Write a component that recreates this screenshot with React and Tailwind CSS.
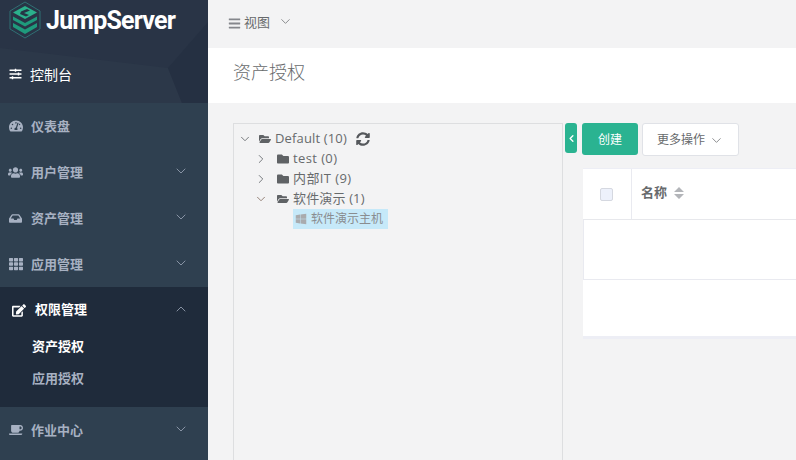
import React from "react";
import { FaTachometerAlt, FaUsers, FaInbox, FaTh, FaEdit, FaCoffee, FaWindows, FaFolder, FaFolderOpen, FaSyncAlt, FaBars, FaSlidersH } from "react-icons/fa";
import { LuChevronDown, LuChevronUp, LuChevronRight, LuChevronLeft } from "react-icons/lu";

const cjk = '"Open Sans","Noto Sans CJK SC",sans-serif';

function Item({ icon, label, arrow = true }) {
  return (
    <div className="flex h-[46px] items-center pl-[8px] pr-[19px] text-[13px] font-bold text-[#a7b1c2]">
      <span className="flex w-[15px] justify-center">{icon}</span>
      <span className="ml-[8px] flex-1 pt-[1px]">{label}</span>
      {arrow && <LuChevronDown className="mb-[3px] h-[16px] w-[16px] text-[#97a1b3]" strokeWidth={1.3} />}
    </div>
  );
}

function Logo() {
  return (
    <svg width="32" height="38" viewBox="0 0 32 38" className="shrink-0">
      <path d="M16 1 L31 10 V28 L16 37 L1 28 V10 Z" fill="none" stroke="#2f6f73" strokeWidth="1" />
      <path d="M16 5 L28 11.5 L16 18 L4 11.5 Z" fill="#2bb08c" />
      <path d="M4 15.5 L16 22 L28 15.5 V19 L16 25.5 L4 19 Z" fill="#1f9a7c" />
      <path d="M4 22 L16 28.5 L28 22 V26 L16 33 L4 26 Z" fill="#1f9a7c" />
      <path d="M12 10.5 L18 8 L21 9.5 L15 12 L20 14 L17 15.5 L11 13 Z" fill="#263445" />
    </svg>
  );
}

function TreeRow({ arrow, folder, label, sub, extra, wide }) {
  return (
    <div className={`flex h-[20px] items-center text-[13px] text-[#676a6c] ${sub ? "pl-[16px]" : ""} ${wide ? "tracking-[0.4px]" : "tracking-[0.15px]"}`}>
      <span className="flex w-[14px] justify-center text-[#6f7276]">{arrow}</span>
      <span className={`flex w-[14px] justify-center text-[12px] text-[#5f6265] ${sub ? "ml-[8px]" : "ml-[6px]"}`}>{folder}</span>
      <span className="ml-[3px] whitespace-nowrap">{label}</span>
      {extra}
    </div>
  );
}

export default function App() {
  const down = <LuChevronDown className="h-[14px] w-[14px]" strokeWidth={1.6} />;
  const right = <LuChevronRight className="h-[14px] w-[14px]" strokeWidth={1.6} />;
  return (
    <div className="flex h-[460px] w-[796px] overflow-hidden bg-[#f3f3f4]" style={{ fontFamily: cjk }}>
      <aside className="flex w-[208px] shrink-0 flex-col bg-[#2f4050]">
        <div className="relative h-[103px] overflow-hidden bg-[#293446]">
          <svg className="absolute inset-0" width="208" height="103" viewBox="0 0 208 103">
            <path d="M0 48 L168 68 L182 103 L0 103 Z" fill="#2c3849" />
            <path d="M168 68 L208 22 V103 H182 Z" fill="#253042" />
          </svg>
          <div className="relative flex flex-col">
            <div className="flex h-[39px] items-center pl-[9px] pt-[1px]">
              <Logo />
              <span className="ml-[5px] text-[25px] font-bold leading-none tracking-[-0.8px] text-white" style={{ fontFamily: "Roboto,sans-serif" }}>JumpServer</span>
            </div>
            <div className="mt-[16px] flex h-[38px] items-center pl-[9px] text-[14px] text-white">
              <FaSlidersH className="h-[12px] w-[13px]" />
              <span className="ml-[8px]">控制台</span>
            </div>
          </div>
        </div>
        <Item icon={<FaTachometerAlt className="h-[14px] w-[14px]" />} label="仪表盘" arrow={false} />
        <Item icon={<FaUsers className="h-[15px] w-[15px]" />} label="用户管理" />
        <Item icon={<FaInbox className="h-[13px] w-[13px]" />} label="资产管理" />
        <Item icon={<FaTh className="h-[14px] w-[14px]" />} label="应用管理" />
        <div className="h-[120px] bg-[#1f2b3b] text-[13px] font-bold">
          <div className="flex h-[46px] items-center pl-[12px] pr-[19px] text-white">
            <FaEdit className="h-[13px] w-[14px]" />
            <span className="ml-[9px] flex-1">权限管理</span>
            <LuChevronUp className="mb-[3px] h-[16px] w-[16px] text-[#97a1b3]" strokeWidth={1.3} />
          </div>
          <div className="flex h-[28px] items-center pl-[32px] text-white">资产授权</div>
          <div className="mt-[4px] flex h-[28px] items-center pl-[32px] text-[#a7b1c2]">应用授权</div>
        </div>
        <Item icon={<FaCoffee className="h-[14px] w-[14px]" />} label="作业中心" />
      </aside>
      <main className="flex min-w-0 flex-1 flex-col">
        <div className="flex h-[48px] shrink-0 items-center pb-[2px] pl-[20px] text-[13px] text-[#676a6c]">
          <FaBars className="h-[13px] w-[13px] text-[#85878c]" />
          <span className="ml-[3px]">视图</span>
          <LuChevronDown className="mb-[3px] ml-[8px] h-[15px] w-[15px]" strokeWidth={1.2} />
        </div>
        <div className="flex h-[55px] shrink-0 items-center bg-white pb-[6px] pl-[25px] text-[18px] font-light text-[#676a6c]">资产授权</div>
        <div className="flex min-h-0 flex-1 pl-[25px] pt-[20px]">
          <div className="h-[400px] w-[330px] shrink-0 border border-[#dddee0] pl-[4px] pt-[5px]">
            <TreeRow arrow={down} folder={<FaFolderOpen />} label="Default (10)" extra={<FaSyncAlt className="ml-[9px] h-[14px] w-[14px] text-[#55585c]" />} />
            <TreeRow sub wide arrow={right} folder={<FaFolder />} label="test (0)" />
            <TreeRow sub wide arrow={right} folder={<FaFolder />} label="内部IT (9)" />
            <TreeRow sub arrow={<span className="text-[#8f7b70]">{down}</span>} folder={<FaFolderOpen />} label="软件演示 (1)" />
            <div className="ml-[55px] flex h-[20px] w-[95px] items-center bg-[#c6e9f9] pl-[2px] text-[12px] text-[#8a8d90]">
              <FaWindows className="h-[12px] w-[12px] text-[#a9abae]" />
              <span className="ml-[4px] whitespace-nowrap">软件演示主机</span>
            </div>
          </div>
          <div className="ml-[2px] flex h-[30px] w-[12px] shrink-0 items-center justify-center rounded-[3px] bg-[#2ab391] text-white">
            <LuChevronLeft className="h-[11px] w-[11px]" strokeWidth={3} />
          </div>
          <div className="ml-[5px] min-w-0 flex-1">
            <div className="flex h-[32px]">
              <div className="flex h-[32px] w-[56px] items-center justify-center rounded-[3px] bg-[#2ab391] pt-[1px] text-[12px] text-white">创建</div>
              <div className="ml-[4px] flex h-[33px] w-[97px] items-center justify-center rounded-[3px] border border-[#e0e2e7] bg-white pt-[1px] text-[12px] text-[#676a6c]">
                更多操作
                <LuChevronDown className="ml-[4px] h-[15px] w-[15px]" strokeWidth={1.2} />
              </div>
            </div>
            <div className="ml-[1px] mt-[13px] w-[240px] border-t border-[#edeef5] bg-white">
              <div className="flex h-[51px] border-b border-[#e7e8ec]">
                <div className="flex w-[49px] items-center justify-center border-r border-[#e9eaf0] pr-[2px]">
                  <span className="h-[13px] w-[13px] rounded-[2px] border border-[#d5d8e0] bg-[#edf1fb]" />
                </div>
                <div className="flex items-center pb-[3px] pl-[9px] text-[13px] font-bold text-[#676a6c]">
                  名称
                  <svg width="10" height="14" viewBox="0 0 10 14" className="ml-[7px]">
                    <path d="M5 1 L10 6 H0 Z M5 13 L0 8 H10 Z" fill="#b3b5b9" />
                  </svg>
                </div>
              </div>
              <div className="h-[60px] border-b border-l border-[#e9eaf0]" />
              <div className="h-[59px] border-b-[3px] border-[#edeef5]" />
            </div>
          </div>
        </div>
      </main>
    </div>
  );
}
